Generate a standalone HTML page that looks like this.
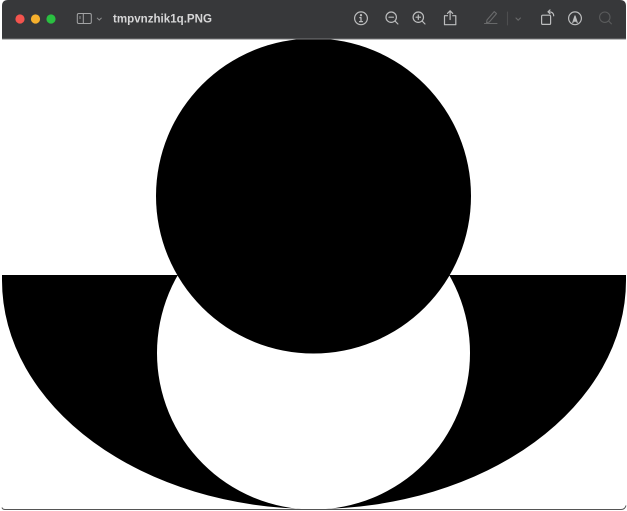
<!DOCTYPE html>
<html>
<head>
<meta charset="utf-8">
<style>
html,body{margin:0;padding:0;background:#fff;width:627px;height:511px;overflow:hidden}
svg{display:block;position:absolute;left:0;top:0}
text{font-family:"Liberation Sans",sans-serif}
.soft{filter:blur(.3px)}
</style>
</head>
<body>
<svg width="627" height="511" viewBox="0 0 627 511" xmlns="http://www.w3.org/2000/svg">
  <rect width="627" height="511" fill="#fff"/>
  <!-- artwork -->
  <path d="M2 275H626V280.5A312 228.5 0 0 1 2 280.5Z" fill="#000"/>
  <circle cx="313.5" cy="353" r="156.5" fill="#fff"/>
  <circle cx="313.5" cy="196" r="157.5" fill="#000"/>
  <!-- window bottom edge -->
  <path d="M2 507.5Q2.5 509.5 5 509.5H621Q625 509.5 626 505.5" fill="none" stroke="#555" stroke-width="1"/>
  <!-- titlebar -->
  <path d="M2 39V6Q2 0 8 0H620Q626 0 626 6V39Z" fill="#37383a"/>
  <rect x="2" y="38.5" width="624" height="1" fill="#77787a"/>
  <circle cx="20" cy="19" r="4.6" fill="#f4544e"/>
  <circle cx="35.5" cy="19" r="4.6" fill="#f6b02d"/>
  <circle cx="51" cy="19" r="4.6" fill="#2ac041"/>
  <g class="soft">
  <g fill="none" stroke="#a3a4a5" stroke-width="1">
    <rect x="77.3" y="13.5" width="14" height="10" rx="1.5"/>
    <path d="M83.3 13.5V23.5"/>
    <path d="M80 16V19" stroke="#8a8b8c"/>
    <path d="M97 17.8l2.3 2.2 2.3-2.2" stroke="#8f9091"/>
  </g>
  <text x="113" y="22.5" font-size="11.5" font-weight="700" fill="#d6d6d7" textLength="99" lengthAdjust="spacingAndGlyphs">tmpvnzhik1q.PNG</text>
  <g fill="none" stroke="#bcbdbe" stroke-width="1.2" stroke-linecap="round" stroke-linejoin="round">
    <!-- info -->
    <circle cx="361" cy="18.3" r="6.4"/>
    <path d="M361 17.6v3.9M359.5 21.6h3M359.8 17.6h1.2"/>
    <circle cx="361" cy="15.2" r=".55" fill="#bcbdbe"/>
    <!-- zoom out -->
    <circle cx="391.2" cy="17.2" r="5.2"/>
    <path d="M395 21l2.9 3M389 17.2h4.4"/>
    <!-- zoom in -->
    <circle cx="418.3" cy="17.2" r="5.2"/>
    <path d="M422.1 21l2.9 3M416.1 17.2h4.4M418.3 15v4.4"/>
    <!-- share -->
    <path d="M447.5 15.7h-3v9h11.3v-9h-3"/>
    <path d="M450.1 19.5V11M447.5 13.4l2.6-2.6 2.6 2.6"/>
    <!-- rotate -->
    <rect x="541.6" y="15.2" width="9" height="9.2" rx="1.2"/>
    <path d="M548.5 11.8q5 -.2 5.2 4M550 9.9l-2 1.9 2 1.9"/>
    <!-- markup -->
    <circle cx="575" cy="18.3" r="6.4"/>
    <path d="M572.8 22.6l2.2-6.6 2.2 6.6"/>
    <path d="M573.7 21.5h2.6l-1.3-3.5Z" fill="#bcbdbe" stroke-width=".6"/>
  </g>
  <g fill="none" stroke="#68696a" stroke-width="1.1" stroke-linecap="round" stroke-linejoin="round">
    <!-- pencil -->
    <path d="M487 20l7.2-8.4 2.3 2-7.2 8.4-2.8.8Z"/>
    <path d="M484.5 23.5h12.5"/>
    <!-- divider -->
    <path d="M507.5 12v13" stroke="#4d4e4f"/>
    <!-- chevron -->
    <path d="M516 18l2.2 2.2 2.2-2.2"/>
    <!-- search -->
    <circle cx="604.8" cy="17.2" r="5.2" stroke="#5a5b5c"/>
    <path d="M608.6 21l2.8 2.8" stroke="#5a5b5c"/>
  </g>
  </g>
</svg>
</body>
</html>
